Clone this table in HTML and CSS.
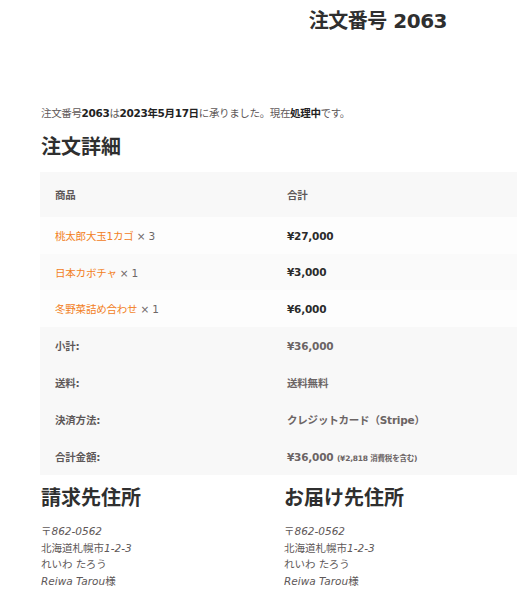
FILE: index.html
```html
<!DOCTYPE html>
<html lang="ja">
<head>
<meta charset="utf-8">
<title>注文番号 2063</title>
<link rel="stylesheet" href="styles.css">
</head>
<body>
<header class="page-head">
  <h1 class="page-title">注文番号 2063</h1>
</header>
<main class="content">
  <p class="notice">注文番号<mark>2063</mark>は<mark>2023年5月17日</mark>に承りました。現在<mark>処理中</mark>です。</p>
  <h2 class="section-title">注文詳細</h2>
  <table class="order-table">
    <thead>
      <tr><th class="col-name">商品</th><th>合計</th></tr>
    </thead>
    <tbody>
      <tr class="odd"><td class="col-name"><a href="#">桃太郎大玉1カゴ</a> <span class="qty">× 3</span></td><td class="price">¥27,000</td></tr>
      <tr class="even"><td class="col-name"><a href="#">日本カボチャ</a> <span class="qty">× 1</span></td><td class="price">¥3,000</td></tr>
      <tr class="odd last"><td class="col-name"><a href="#">冬野菜詰め合わせ</a> <span class="qty">× 1</span></td><td class="price">¥6,000</td></tr>
    </tbody>
    <tfoot>
      <tr><th class="col-name">小計:</th><td class="val">¥36,000</td></tr>
      <tr><th class="col-name">送料:</th><td class="val">送料無料</td></tr>
      <tr><th class="col-name">決済方法:</th><td class="val">クレジットカード（Stripe）</td></tr>
      <tr><th class="col-name">合計金額:</th><td class="val">¥36,000 <small class="tax">(¥2,818 消費税を含む)</small></td></tr>
    </tfoot>
  </table>
  <section class="addresses">
    <div class="addr">
      <h2 class="section-title">請求先住所</h2>
      <address><span class="ja">〒</span>862-0562<br><span class="ja">北海道札幌市</span>1-2-3<br><span class="ja">れいわ たろう</span><br>Reiwa Tarou<span class="ja">様</span></address>
    </div>
    <div class="addr">
      <h2 class="section-title">お届け先住所</h2>
      <address><span class="ja">〒</span>862-0562<br><span class="ja">北海道札幌市</span>1-2-3<br><span class="ja">れいわ たろう</span><br>Reiwa Tarou<span class="ja">様</span></address>
    </div>
  </section>
</main>
</body>
</html>
```
FILE: styles.css
```css
html, body {
  margin: 0;
  padding: 0;
  background: #ffffff;
}
body {
  font-family: "DejaVu Sans", "Noto Sans CJK JP", sans-serif;
  font-size: 10.5px;
  color: #5e5858;
  width: 517px;
  overflow: hidden;
}
.page-head {
  display: flex;
  justify-content: flex-end;
  padding: 6px 70px 0 0;
}
.page-title {
  margin: 0;
  font-size: 20px;
  line-height: 30px;
  font-weight: 700;
  color: #2f2f2f;
  letter-spacing: -0.5px;
}
.content {
  padding-left: 40px;
}
.notice {
  margin: 68px 0 0 1px;
  line-height: 18px;
  color: #5e5858;
  letter-spacing: -0.35px;
}
.notice mark {
  background: none;
  color: #222;
  font-weight: 700;
}
.section-title {
  margin: 11px 0 0 1px;
  font-size: 20px;
  line-height: 28px;
  font-weight: 700;
  color: #2f2f2f;
}
.order-table {
  margin-top: 11px;
  width: 477px;
  border-collapse: collapse;
  table-layout: fixed;
  letter-spacing: -0.2px;
}
.order-table th,
.order-table td {
  padding: 0 15px;
  text-align: left;
  vertical-align: middle;
}
.order-table .col-name {
  width: 202px;
}
.order-table thead tr {
  height: 45px;
  background: #f8f8f8;
}
.order-table thead th {
  font-weight: 600;
  color: #5e5858;
}
.order-table tbody tr {
  height: 37px;
}
.order-table tbody tr.even {
  height: 36px;
  background: #fafafa;
}
.order-table tbody tr.odd {
  background: #fdfdfd;
}
.order-table a {
  color: #f2801c;
  text-decoration: none;
}
.order-table .qty {
  color: #6d6767;
}
.order-table .price {
  font-weight: 700;
  color: #2b2b2b;
}
.order-table tfoot tr {
  height: 37px;
  background: #f8f8f8;
}
.order-table tfoot th {
  font-weight: 700;
  color: #5e5858;
}
.order-table tfoot td.val {
  font-weight: 600;
  color: #6b6464;
}
.order-table .tax {
  font-size: 7.5px;
  font-weight: 600;
}
.addresses {
  display: grid;
  grid-template-columns: 243px 1fr;
  margin-top: -2px;
}
.addr address {
  margin: 11px 0 0 1px;
  line-height: 16.5px;
  font-style: italic;
  color: #5e5858;
}
.addr .ja {
  font-style: normal;
}
```
